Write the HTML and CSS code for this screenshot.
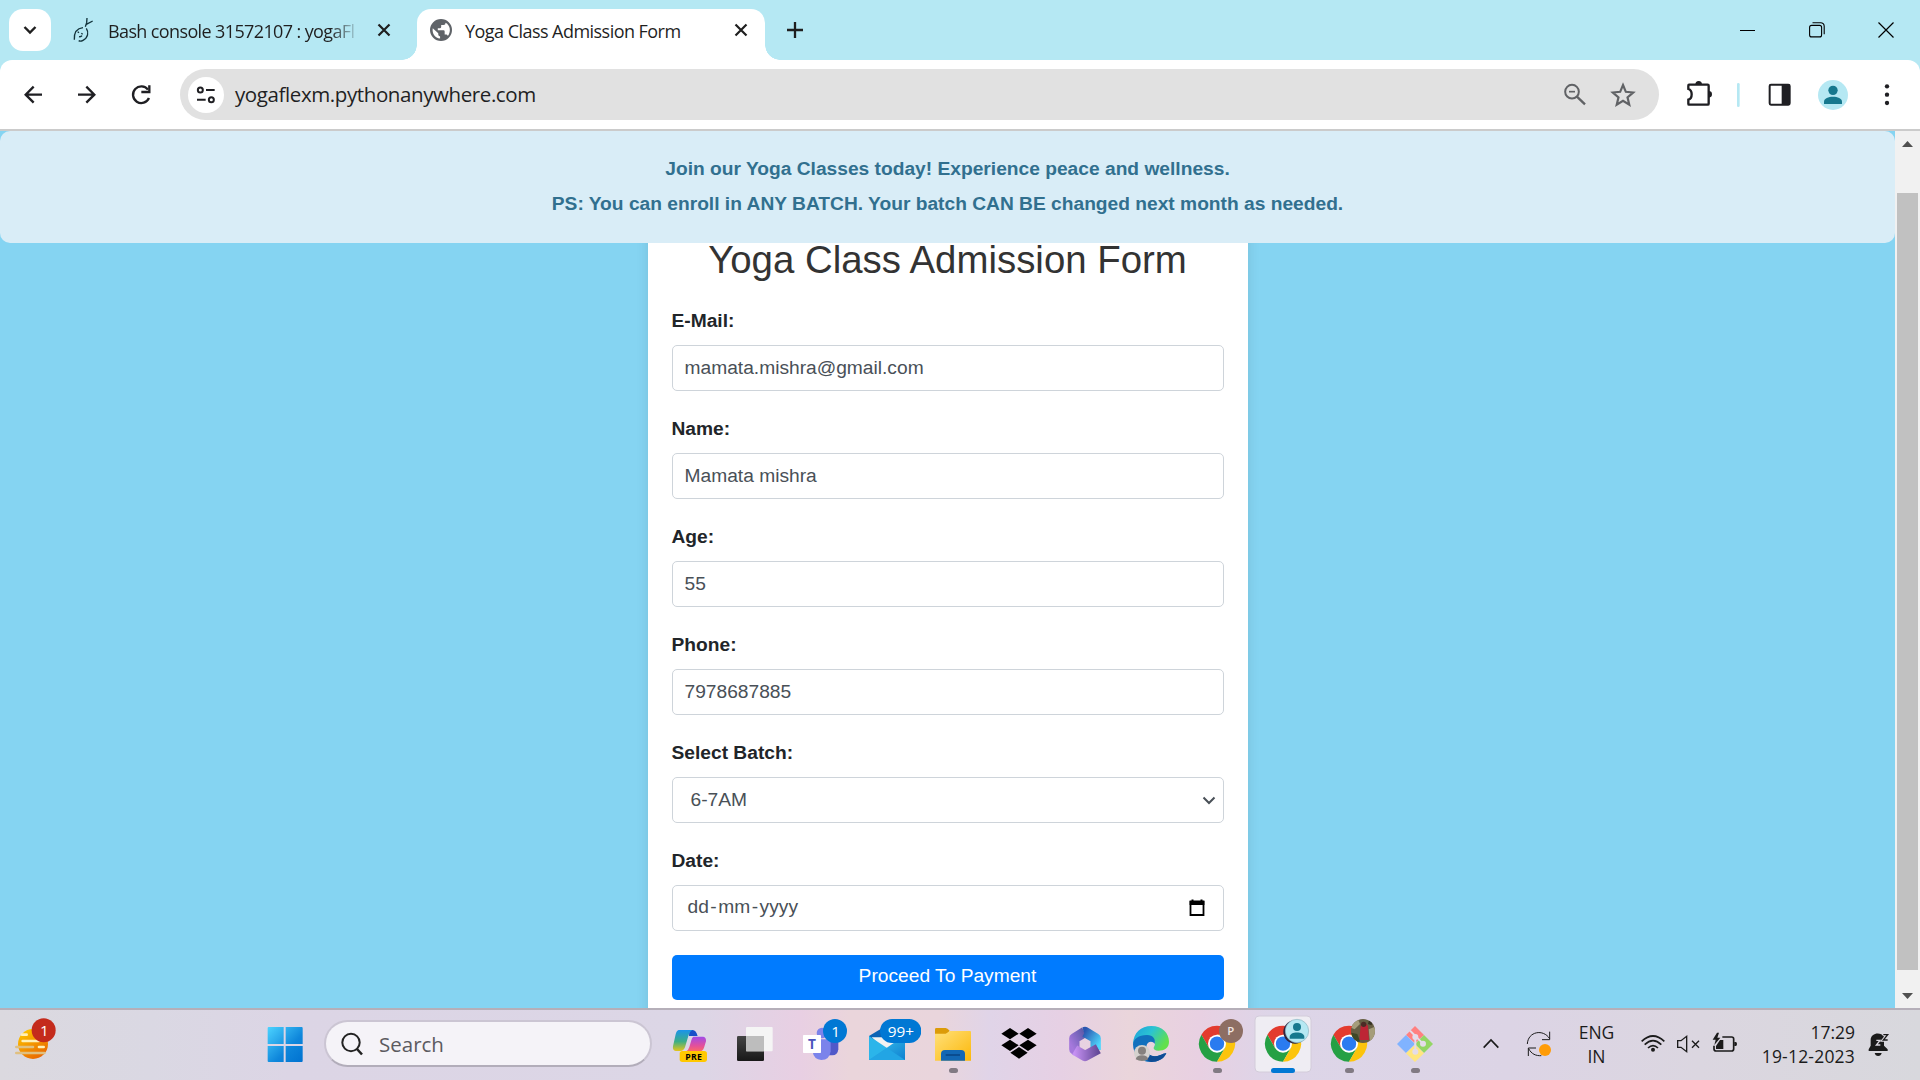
FILE: index.html
```html
<!DOCTYPE html>
<html lang="en">
<head>
<meta charset="utf-8">
<title>Yoga Class Admission Form</title>
<link rel="stylesheet" href="styles.css">
</head>
<body>
<header class="tabstrip">
  <div class="tab-search"><svg width="42" height="42" viewBox="0 0 42 42"><path d="M15.500 18l5.500 5.500 5.500-5.500" fill="none" stroke="#1f1f1f" stroke-width="2.400"/></svg></div>
  <div class="tab tab-idle">
    <svg class="fav" width="22" height="26" viewBox="222 52 66 78" fill="none" stroke="#12333b" stroke-width="4"><path d="M264 55l-1 14-4 12M281 64l-19 10M226 120c-1-20 8-34 26-36M262 86c8 12 5 28-10 36-5 3-10 3-13 1"/><path d="M236 96l4 3M247 101l4 3M240 111c4 1 7 0 9-3" stroke-width="4"/></svg>
    <span class="tab-title fade">Bash console 31572107 : yogaFl</span>
    <svg class="close" width="18" height="18" viewBox="0 0 18 18"><path d="M3.500 3.500l11 11M14.500 3.500l-11 11" stroke="#1f1f1f" stroke-width="2.200"/></svg>
  </div>
  <div class="tab tab-active">
    <svg class="fav" width="22" height="22" viewBox="0 0 24 24"><path fill="#5f6368" d="M12 0a12 12 0 1 0 0 24 12 12 0 0 0 0-24zM3 10l6 5.500v1.500a2 2 0 0 0 2 2v2.300C5.500 20.600 2 16 3 10zm16.500 8.500c-.4-1-1.300-1.500-2.400-1.500H16v-3.500a1.200 1.200 0 0 0-1.200-1.200H8.500V10H11a1.200 1.200 0 0 0 1.200-1.200V6.500h2.300A2.400 2.400 0 0 0 17 4c5 2.500 6.300 9.500 2.500 14.500z"/></svg>
    <span class="tab-title">Yoga Class Admission Form</span>
    <svg class="close" width="18" height="18" viewBox="0 0 18 18"><path d="M3.500 3.500l11 11M14.500 3.500l-11 11" stroke="#1f1f1f" stroke-width="2.200"/></svg>
  </div>
  <svg class="newtab" width="18" height="18" viewBox="0 0 18 18"><path d="M9 1v16M1 9h16" stroke="#1f1f1f" stroke-width="2.300"/></svg>
  <div class="window-controls">
    <svg width="16" height="16" viewBox="0 0 16 16"><path d="M0 8.500h15" stroke="#000"/></svg>
    <svg width="16" height="16" viewBox="0 0 16 16" fill="none" stroke="#000" stroke-width="1.100"><rect x=".6" y="3.400" width="12" height="11.500" rx="2"/><path d="M3.500.7h8.200a3.500 3.500 0 0 1 3.500 3.500v8"/></svg>
    <svg width="16" height="16" viewBox="0 0 16 16"><path d="M.5.5l15 15M15.500.5l-15 15" stroke="#000" stroke-width="1.200"/></svg>
  </div>
</header>

<nav class="toolbar">
  <svg class="nav-icons" width="180" height="69" viewBox="0 180 540 207" fill="none" stroke="#1f1f23" stroke-width="7"><path d="M126 284H77M101 260l-24 24 24 24M234 284h49M259 260l24 24-24 24"/><path d="M444 269a25 25 0 1 0 3 25"/><path d="M448 256v20h-24" /></svg>
  <div class="omnibox">
    <div class="site-info"><svg width="36" height="36" viewBox="563 230 108 108" fill="none" stroke="#1f1f23" stroke-width="6"><circle cx="600" cy="269" r="7.500"/><path d="M617 269h26M590 298h26"/><circle cx="633" cy="298" r="7.500"/></svg></div>
    <span class="url">yogaflexm.pythonanywhere.com</span>
    <svg class="omni-actions" width="98" height="51" viewBox="183 207 294 153" fill="none" stroke="#606265" stroke-width="6"><circle cx="216" cy="275" r="20.500"/><path d="M207 275h18" stroke-width="5"/><path d="M230 289l25 24" stroke-width="7"/><path d="M369 255l8.500 20.500 22 2-17 14.500 5.300 22-18.800-11.500-18.800 11.500 5.300-22-17-14.500 22-2z" stroke-width="6.500"/></svg>
  </div>
  <svg class="ext-icons" width="261" height="69" viewBox="477 180 783 207"><path d="M567 254h56q3 0 3 3v54q0 3-3 3h-56q-2 0-2-3v-12q10-2 10-16 0-13-10-16v-10q0-3 2-3z" fill="none" stroke="#1f1f23" stroke-width="7"/><path d="M586 254a10 11 0 0 1 20 0zM626 273a10 10 0 0 1 0 20z" fill="#1f1f23"/><rect x="711" y="249" width="8" height="72" rx="4" fill="#b5e8f3"/><rect x="809" y="254" width="60" height="60" rx="4" fill="none" stroke="#1f1f23" stroke-width="6"/><path d="M845 254h24v60h-24z" fill="#1f1f23"/><circle cx="999" cy="285" r="45" fill="#b5e8f3"/><circle cx="999" cy="271" r="14" fill="#16788e"/><path d="M972 312v-7c0-20 54-20 54 0v7z" fill="#16788e"/><g fill="#1f1f23"><circle cx="1161" cy="259" r="6.500"/><circle cx="1161" cy="284" r="6.500"/><circle cx="1161" cy="309" r="6.500"/></g></svg>
</nav>

<main class="viewport">
  <div class="page">
    <div class="banner">
      <p>Join our Yoga Classes today! Experience peace and wellness.</p>
      <p>PS: You can enroll in ANY BATCH. Your batch CAN BE changed next month as needed.</p>
    </div>
    <form class="card">
      <h2>Yoga Class Admission Form</h2>
      <div class="group"><label>E-Mail:</label><div class="control">mamata.mishra@gmail.com</div></div>
      <div class="group"><label>Name:</label><div class="control">Mamata mishra</div></div>
      <div class="group"><label>Age:</label><div class="control">55</div></div>
      <div class="group"><label>Phone:</label><div class="control">7978687885</div></div>
      <div class="group"><label>Select Batch:</label><div class="control select"><span>6-7AM</span><svg width="14" height="9" viewBox="0 0 14 9"><path d="M1.500 1.500L7 7l5.500-5.500" fill="none" stroke="#495057" stroke-width="2"/></svg></div></div>
      <div class="group"><label>Date:</label><div class="control date"><span>dd<i>-</i>mm<i>-</i>yyyy</span><svg width="16" height="18" viewBox="0 0 16 18"><path d="M1.500 2.500h13v13.500h-13z" fill="none" stroke="#000" stroke-width="1.800"/><path d="M.6 2h14.800v4H.6zM2.500.5h2v2h-2zM11.500.5h2v2h-2z"/></svg></div></div>
      <button type="button">Proceed To Payment</button>
    </form>
  </div>
  <aside class="scrollbar"><svg width="25" height="62" viewBox="0 0 25 62"><path d="M7 16l5.500-6 5.500 6z" fill="#505050"/></svg><div class="thumb"></div><svg width="25" height="38" viewBox="0 0 25 38"><path d="M7 23l5.500 6 5.500-6z" fill="#505050"/></svg></aside>
</main>

<footer class="taskbar">
  <svg width="0" height="0" class="defs"><defs>
    <linearGradient id="sun" x1="0" y1="0" x2=".6" y2="1"><stop offset="0" stop-color="#ffd000"/><stop offset="1" stop-color="#ea6a00"/></linearGradient>
    <linearGradient id="win" x1="0" y1="0" x2="1" y2="1"><stop offset="0" stop-color="#4cd3ff"/><stop offset=".6" stop-color="#0e86db"/><stop offset="1" stop-color="#0072d0"/></linearGradient>
    <linearGradient id="cpl" x1="0" y1="0" x2="0" y2="1"><stop offset="0" stop-color="#1a93ec"/><stop offset=".55" stop-color="#3cae86"/><stop offset="1" stop-color="#e5c51a"/></linearGradient>
    <linearGradient id="cpr" x1="0" y1="0" x2="0" y2="1"><stop offset="0" stop-color="#a04be8"/><stop offset=".6" stop-color="#e2509c"/><stop offset="1" stop-color="#ff6b62"/></linearGradient>
    <linearGradient id="dk" x1="0" y1="0" x2="0" y2="1"><stop offset="0" stop-color="#444"/><stop offset="1" stop-color="#181818"/></linearGradient>
    <linearGradient id="mail" x1="0" y1="0" x2="1" y2="1"><stop offset="0" stop-color="#3dcaf2"/><stop offset="1" stop-color="#0f80d0"/></linearGradient>
    <linearGradient id="fold" x1="0" y1="0" x2="1" y2="1"><stop offset="0" stop-color="#ffe07a"/><stop offset="1" stop-color="#fcb80a"/></linearGradient>
    <linearGradient id="edgeTop" x1="0" y1="0" x2="1" y2=".5"><stop offset="0" stop-color="#1d9fdc"/><stop offset=".5" stop-color="#2bc3d2"/><stop offset="1" stop-color="#62e04c"/></linearGradient>
    <linearGradient id="m1" x1="0" y1="1" x2="1" y2="0"><stop offset="0" stop-color="#a578dc"/><stop offset="1" stop-color="#5c5aa8"/></linearGradient>
    <linearGradient id="m2" x1="0" y1="0" x2="1" y2="1"><stop offset="0" stop-color="#2a56b0"/><stop offset="1" stop-color="#4fd6fc"/></linearGradient>
    <linearGradient id="m3" x1="0" y1="0" x2="1" y2="0"><stop offset="0" stop-color="#c590f2"/><stop offset="1" stop-color="#654a98"/></linearGradient>
    <g id="chrome"><path fill="#e33b2e" d="M-46.800-27A54 54 0 0 1 46.800-27H0L-23.400 13.500z"/><path fill="#25a044" d="M-46.800-27L-23.400 13.500H23.400L0 54A54 54 0 0 1-46.800-27z"/><path fill="#fcc40c" d="M46.800-27A54 54 0 0 1 0 54L23.400 13.500 0-27z"/><circle r="27" fill="#fff"/><circle r="21.500" fill="#2a7bf0"/></g>
  </defs></svg>
  <svg class="widget" width="80" height="70" viewBox="0 30 240 210"><circle cx="99" cy="132" r="45" fill="url(#sun)"/><g stroke="#fff1b8" stroke-width="8" stroke-linecap="round"><path d="M66 104h14M68 123h48M117 141h14"/><path d="M49 141h50M49 159h84" stroke="#e0c080"/></g><circle cx="131" cy="91" r="36" fill="#c42b1c"/><text x="133" y="108" font-size="46" fill="#fff" text-anchor="middle">1</text></svg>
  <svg class="start" width="36" height="70" viewBox="802 30 108 210"><path d="M804 84q0-3 3-3h45v51h-48zM858 81h48q3 0 3 3v48h-51zM804 138h48v48h-45q-3 0-3-3zM858 138h51v45q0 3-3 3h-48z" fill="url(#win)"/></svg>
  <div class="search"><svg width="24" height="24" viewBox="0 0 24 24" fill="none" stroke="#222"><circle cx="11" cy="10.500" r="8.700" stroke-width="2"/><path d="M17 17l5 5.500" stroke-width="2.600"/></svg><span>Search</span></div>
  <div class="apps">
    <svg viewBox="1011 30 198 210"><path d="M1108 90h10q10 0 15 18h-26z" fill="#174fc9"/><path d="M1076 90h42q-9 3-13 18l-10 34q-4 11-14 11h-14q-10-2-8-14l8-36q3-12 9-13z" fill="url(#cpl)"/><path d="M1120 110h30q9 2 8 14l-6 19q-4 12-16 12h-39q8-3 11-14l6-20q2-9 6-11z" fill="url(#cpr)"/><rect x="1079" y="153" width="82" height="33" rx="8" fill="#ffc800"/><text x="1121" y="180" font-size="26" font-weight="700" text-anchor="middle" letter-spacing="1">PRE</text></svg>
    <svg viewBox="1209 30 198 210"><rect x="1251" y="108" width="81" height="75" rx="4" fill="url(#dk)"/><rect x="1278" y="81" width="80" height="73" rx="3" fill="#f5f5f5"/><path d="M1278 108h54v46h-54z" fill="#bdbdbd"/></svg>
    <svg viewBox="27 30 198 210"><circle cx="126" cy="99" r="16" fill="#7b83eb"/><path d="M145 120h30v28q-2 18-18 18h-12z" fill="#5059c9"/><path d="M98 118h54v36q-3 26-28 26-22-1-26-24z" fill="#7b83eb"/><rect x="69" y="105" width="54" height="54" rx="2" fill="#fff"/><text x="96" y="147" font-size="41" font-weight="700" fill="#4b53bc" text-anchor="middle">T</text><circle cx="165" cy="93" r="36" fill="#0078d4"/><text x="167" y="110" font-size="46" fill="#fff" text-anchor="middle">1</text></svg>
    <svg viewBox="225 30 198 210"><path d="M267 108l40-24 68 24v40H267z" fill="#0c63b4"/><path d="M275 112h90v26l-45 16z" fill="#f2f2f2"/><path d="M267 108l108 72H267z" fill="#2bb5ea"/><path d="M375 106v74H267z" fill="url(#mail)"/><path d="M267 180l54-36 54 36z" fill="#22a5e4"/><rect x="300" y="57" width="124" height="72" rx="36" fill="#0078d4"/><text x="363" y="110" font-size="46" fill="#fff" text-anchor="middle">99+</text></svg>
    <svg viewBox="423 30 198 210"><path d="M465 88q0-4 4-4h28q5 0 12 8l-10 12h-34z" fill="#dc9b08"/><path d="M465 101h32l13-8h60q3 0 3 3v86H465z" fill="url(#fold)"/><path d="M483 182v-20q0-12 12-12h48q12 0 12 12v20z" fill="#1267b4"/><path d="M497 165h43" stroke="#073f7d" stroke-width="4"/><rect x="507" y="204" width="27" height="15" rx="7.500" fill="#817a83"/></svg>
    <svg viewBox="621 30 198 210"><path d="M690 84l26 17-26 17-26-17zM744 84l26 17-26 17-26-17zM690 119l26 17-26 17-26-17zM744 119l26 17-26 17-26-17zM717 141l26 17-26 18-26-18z"/></svg>
    <svg viewBox="819 30 198 210" fill="none" stroke-width="31" stroke-linejoin="round"><path d="M890 153l-7-5v-33l31-19" stroke="url(#m1)"/><path d="M912 97l3-1 32 19v35" stroke="url(#m2)"/><path d="M955 146l-40 22-31-18" stroke="url(#m3)"/></svg>
    <svg viewBox="-3 30 198 210"><path d="M39 132C40 98 63 78 94 78c34 0 53 22 53 47 0 18-13 27-32 27-10 0-14-4-14-8 0-3 4-5 4-14 0-12-10-19-24-19-20 0-34 9-42 21z" fill="url(#edgeTop)"/><path d="M39 132c2-15 16-27 42-27 18 0 27 13 23 27-5-10-22-10-25 7-4 24 18 36 42 26 8-3 14-7 18-5-8 18-27 26-45 26-34 0-55-22-55-54z" fill="#1270bd"/><path d="M79 139c-4 24 18 36 42 26 8-3 14-7 18-5-8 18-27 26-45 26-22-3-31-30-15-47z" fill="#0f4c94"/><circle cx="66" cy="159" r="24" fill="#d5d2ce"/><circle cx="66" cy="152" r="12" fill="#85817e"/><path d="M47 178q3-12 19-12t19 12q-19 10-38 0z" fill="#85817e"/></svg>
    <svg viewBox="195 30 198 210"><use href="#chrome" x="291" y="131"/><circle cx="333" cy="93" r="36" fill="#8d6e63"/><text x="332" y="105" font-size="34" font-weight="600" fill="#f2e8e4" text-anchor="middle">P</text><rect x="279" y="204" width="27" height="15" rx="7.500" fill="#817a83"/></svg>
    <svg viewBox="393 30 198 210"><rect x="405" y="48" width="168" height="168" rx="12" fill="#efedf3" stroke="#d3ccda" stroke-width="3"/><use href="#chrome" x="489" y="131"/><circle cx="525" cy="96" r="35" fill="#2d2440"/><circle cx="531" cy="93" r="35" fill="#b5e8f3" stroke="#8fb4c0" stroke-width="2"/><circle cx="531" cy="81" r="12" fill="#16788e"/><path d="M509 116v-6c0-17 44-17 44 0v6z" fill="#16788e"/><rect x="453" y="204" width="72" height="15" rx="7.500" fill="#0078d4"/></svg>
    <svg viewBox="591 30 198 210"><use href="#chrome" x="687" y="131"/><clipPath id="ph"><circle cx="729" cy="93" r="36"/></clipPath><g clip-path="url(#ph)"><path d="M690 55h80v80h-80z" fill="#665e43"/><path d="M690 62l22-8 8 18-16 16-14-6zM746 88l20-8v40l-16 8z" fill="#a59d7a"/><path d="M722 78q12-16 22 0l3 42h-29z" fill="#bd2535"/><circle cx="731" cy="73" r="8" fill="#4c2b26"/><path d="M692 98l20 4 8 22-18 6z" fill="#3d4826"/><path d="M748 58l12 8-6 10-10-4z" fill="#363324"/></g><rect x="675" y="204" width="27" height="15" rx="7.500" fill="#817a83"/></svg>
    <svg viewBox="789 30 198 210"><path d="M885 78l27 27-27 25-27-25z" fill="#ff8080"/><path d="M912 105l27 27-27 27-27-27z" fill="#93d665"/><path d="M858 105l27 27-27 27-27-27z" fill="#80b3ff"/><path d="M885 134l27 26-27 26-27-26z" fill="#ffe680"/><path d="M870 92l16 16v48M888 110l21 21" fill="none" stroke="#e4dcea" stroke-width="6"/><g fill="#e4dcea"><circle cx="886" cy="111" r="9"/><circle cx="886" cy="155" r="9"/><circle cx="909" cy="131" r="9"/></g><rect x="873" y="204" width="27" height="15" rx="7.500" fill="#817a83"/></svg>
  </div>
  <div class="tray">
    <svg width="114" height="70" viewBox="0 150 342 210" fill="none" stroke="#1b1b1b"><path d="M101 263l22-23 22 23" stroke-width="5"/><path d="M232 252c2-38 48-46 67-16M299 215v24h-23M235 288v-24h23M236 266c8 16 22 22 38 21" stroke-width="3"/><circle cx="285" cy="270" r="18" fill="#ff9c07" stroke="none"/></svg>
    <div class="lang"><span>ENG</span><span>IN</span></div>
    <svg width="120" height="70" viewBox="537 150 360 210" fill="none" stroke="#1b1b1b" stroke-width="5"><path d="M575 244q34-32 68 0M584 254q25-24 50 0M594 264q15-14 30 0"/><circle cx="609" cy="269" r="6" fill="#1b1b1b" stroke="none"/><path d="M683 242h10l17-13v46l-17-13h-10zM726 242l21 21M747 242l-21 21" stroke-width="4"/><path d="M817 231h28q6 0 6 6v30q0 6-6 6h-47q-6 0-6-6v-10"/><path d="M853 246h4q4 0 4 6t-4 6h-4z" fill="#1b1b1b" stroke="none"/><path d="M801 218l-13 21h9l-4 16 18-22h-9l5-15z" fill="#1b1b1b" stroke="none"/><path d="M798 258l12-18h10v27h-22z" fill="#1b1b1b" stroke="none"/></svg>
    <div class="clock"><span>17:29</span><span class="day">19-12-2023</span></div>
    <svg width="40" height="70" viewBox="1215 150 120 210"><path d="M1262 257v-17c0-22 30-26 40-10v27l11 11v5h-57v-5z" fill="#1b1b1b"/><path d="M1274 279h21q-2 9-10.500 9t-10.500-9z" fill="#1b1b1b"/><path d="M1298 223h15l-14 18h15" fill="none" stroke="#dcd9e0" stroke-width="9"/><path d="M1300 224h13l-13 16h13" fill="none" stroke="#1b1b1b" stroke-width="4"/><path d="M1279 241h11l-11 14h12" fill="none" stroke="#dcd9e0" stroke-width="4"/></svg>
  </div>
</footer>
</body>
</html>
```
FILE: styles.css
```css
* { box-sizing: border-box; }
body {
  margin: 0; width: 1920px; height: 1080px; overflow: hidden;
  display: flex; flex-direction: column;
  font-family: "Open Sans", "Noto Sans", sans-serif;
  background: #b5e8f3;
}
svg { display: block; flex: none; }

.tabstrip { height: 60px; flex: none; display: flex; align-items: flex-start; padding: 9px 0 0 9px; }
.tab-search { width: 42px; height: 42px; border-radius: 14px; background: #fff; }
.tab { height: 51px; display: flex; align-items: center; padding-bottom: 9px; }
.tab-idle { width: 366px; padding-left: 22px; }
.tab-title { font-size: 18px; line-height: 28px; color: #1f1f1f; white-space: nowrap; letter-spacing: -.54px; }
.tab-idle .tab-title { width: 252px; margin-left: 13px; letter-spacing: -.62px; padding-top: 2px; }
.fade { -webkit-mask-image: linear-gradient(90deg, #000 88%, transparent); mask-image: linear-gradient(90deg, #000 88%, transparent); }
.tab-idle .close { margin-left: 15px; }
.tab-active { position: relative; width: 348px; background: #fff; border-radius: 14px 14px 0 0; padding-left: 13px; }
.tab-active::before, .tab-active::after { content: ""; position: absolute; bottom: 0; width: 15px; height: 15px; }
.tab-active::before { left: -15px; background: radial-gradient(circle at 0 0, transparent 14.500px, #fff 15px); }
.tab-active::after { right: -15px; background: radial-gradient(circle at 100% 0, transparent 14.500px, #fff 15px); }
.tab-active .tab-title { margin-left: 13px; width: 250px; padding-top: 2px; }
.tab-active .close { margin-left: 17px; }
.newtab { margin: 12px 0 0 21px; }
.window-controls { margin-left: auto; display: flex; gap: 53px; padding: 13px 26px 0 0; }

.toolbar { height: 71px; flex: none; display: flex; background: #fff; border-bottom: 2px solid #cbcbcb; border-radius: 12px 12px 0 0; }
.omnibox { width: 1479px; height: 51px; margin-top: 9px; background: #e1e1e1; border-radius: 26px; display: flex; align-items: center; padding-left: 8px; }
.site-info { width: 36px; height: 36px; border-radius: 50%; background: #fff; }
.url { font-size: 20.500px; margin-left: 11px; padding-bottom: 2px; letter-spacing: -.4px; color: #1f1f23; }
.omni-actions { margin-left: auto; }

.viewport { height: 877px; flex: none; display: flex; background: #85d4f2; overflow: hidden; }
.page { width: 1895px; height: 877px; overflow: hidden; font-family: "Liberation Sans", Arial, sans-serif; font-size: 19.200px; }
.banner { position: relative; z-index: 1; height: 112px; background: #d9edf7; border-radius: 10px; color: #31708f; font-weight: 700; text-align: center; padding-top: 20px; }
.banner p { margin: 0; line-height: 35px; }
.card { width: 600px; margin: -30px auto 0; padding: 24px; background: #fff; box-shadow: 0 0 12px rgba(0,0,0,.1); color: #212529; }
.card h2 { margin: 0 0 24px; font-size: 38.400px; line-height: 46px; font-weight: 400; text-align: center; color: #333; }
.group { margin-bottom: 24px; }
.group label { display: block; line-height: 28.800px; margin-bottom: 9.600px; font-weight: 700; }
.control { height: 45.600px; border: 1px solid #ced4da; border-radius: 5px; padding: 0 12px; display: flex; align-items: center; color: #495057; background: #fff; }
.select { justify-content: space-between; padding: 0 7px 0 18px; }
.date { justify-content: space-between; padding: 0 18px 3px 15px; }
.date svg { margin-top: 3px; }
.date i { font-style: normal; padding: 0 1.500px; }
.card button { display: block; width: 100%; height: 45px; border: 0; border-radius: 5px; background: #007bff; color: #fff; font: inherit; padding: 0 0 2px; }
.scrollbar { width: 25px; background: #f1f1f1; display: flex; flex-direction: column; }
.thumb { flex: 1; margin: 0 2px; background: #c1c1c1; }

.taskbar {
  height: 72px; flex: none; display: flex; border-top: 2px solid #b5afb9;
  background: linear-gradient(90deg, #dbd9df 0, #dad8e3 150px, #dcd5e5 290px, #dcd6e6 700px, #e8cfe3 800px, #ead5db 850px, #e9d5dc 940px, #e0d4e8 990px, #e6d0e4 1060px, #ead5db 1130px, #e8d0e2 1200px, #ddd5e8 1270px, #dcd4e5 1510px, #dbd6e0 1700px, #d8d8dd 1920px);
}
.defs { position: absolute; }
.start { margin-left: 187px; }
.search { width: 328px; height: 47px; margin: 10px 0 0 21px; background: #f5f3f8; border: 2px solid #cbc5d3; border-bottom-color: #b2adba; border-radius: 24px; display: flex; align-items: center; padding-left: 14px; }
.search span { font-size: 20.500px; color: #5c5a60; margin-left: 15px; }
.apps { display: flex; margin-left: 5px; }
.apps svg { width: 66px; height: 70px; }
.tray { display: flex; margin-left: 1px; color: #1b1b1b; font-size: 17.500px; line-height: 24px; }
.lang { width: 65px; display: flex; flex-direction: column; align-items: center; padding-top: 10px; }
.clock { width: 106px; display: flex; flex-direction: column; align-items: flex-end; padding-top: 10px; white-space: nowrap; }
.day { letter-spacing: .2px; }
```
